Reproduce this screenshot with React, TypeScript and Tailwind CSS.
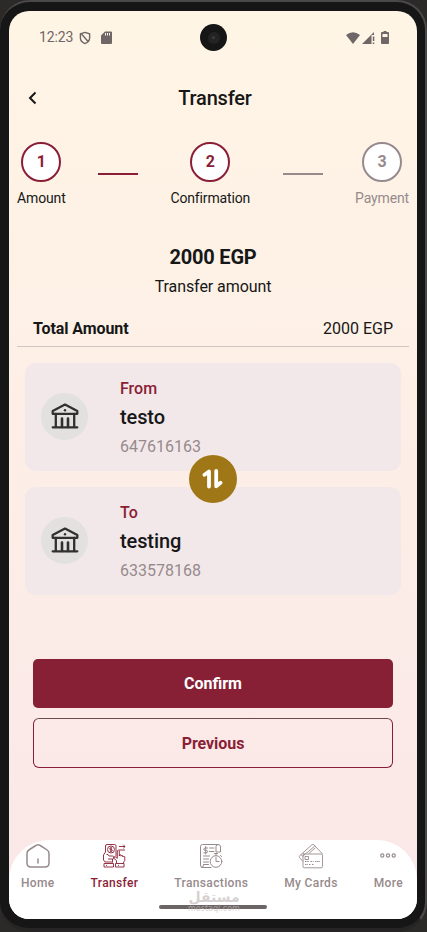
import type { ReactNode } from "react";

function Step({ n, label, active }: { n: number; label: string; active: boolean }) {
  return (
    <div className="flex flex-col items-center">
      <div
        className={`flex size-10 items-center justify-center rounded-full border-[2.500px] bg-white text-[16px] font-bold ${
          active ? "border-[#8a1e36] text-[#8a1e36]" : "border-[#978a8c] text-[#978a8c]"
        }`}
      >
        {n}
      </div>
      <span className={`mt-[6px] text-[14px] leading-5 tracking-[-0.140px] whitespace-nowrap ${active ? "text-[#171717]" : "text-[#978a8c]"}`}>
        {label}
      </span>
    </div>
  );
}

function Dash({ active }: { active: boolean }) {
  return <div className={`mt-[31px] h-[2px] w-10 ${active ? "bg-[#8a1e36]" : "bg-[#978a8c]"}`} />;
}

function BankIcon() {
  return (
    <svg width="28" height="28" viewBox="0 0 28 28" fill="none" stroke="#303030" strokeWidth="2.300" strokeLinecap="round" strokeLinejoin="round">
      <path d="M1.700 11.800V9L14 2.600 26.300 9v2.800z" />
      <path d="M1.700 25.300h24.600M4.800 12v13M23.200 12v13" />
      <path d="M11 16.500V25M17 16.500V25" strokeWidth="2.600" />
      <circle cx="14" cy="8.200" r="1.200" fill="#303030" stroke="none" />
    </svg>
  );
}

function Account({ kind, name, number }: { kind: string; name: string; number: string }) {
  return (
    <div className="flex h-[108px] items-center rounded-[11px] bg-[#f2e8ea] pl-4">
      <div className="mb-[2px] flex size-[47px] items-center justify-center rounded-full bg-[#e2e1df]">
        <BankIcon />
      </div>
      <div className="ml-8 flex flex-col pt-[2px]">
        <span className="text-[16px] leading-6 font-medium text-[#8a1e36]">{kind}</span>
        <span className="mt-px text-[20px] leading-[30px] font-medium tracking-[-0.100px] text-[#171717]">{name}</span>
        <span className="mt-[3px] text-[16px] leading-6 text-[#978a8c]">{number}</span>
      </div>
    </div>
  );
}

function HomeIcon() {
  return (
    <svg width="24" height="26" viewBox="0 0 24 26" fill="none" stroke="#978a8c" strokeWidth="1.500" strokeLinejoin="round" strokeLinecap="round">
      <path d="M9.800 2.500 2.800 7Q1 8.200 1 10.500V20q0 4 4 4h14q4 0 4-4v-9.500Q23 8.200 21.200 7l-7-4.500Q12 1 9.800 2.500zM12 16v4" />
    </svg>
  );
}

function TransferIcon() {
  return (
    <svg width="24" height="26" viewBox="0 0 24 26" fill="none" stroke="#8a1e36" strokeWidth="0.900" strokeLinejoin="round">
      <path d="M3.500 9V3q0-1.500 1.500-1.500h7.500Q14 1.500 14 3v10.500M3.500 9l-2 3v5l1.500 2h7.500M4.500 11.500H6l1 1.500h3.500q1.500 0 1.500 1.500T10.500 16H6M10.500 16v3.500M2 20.500h9.500v3.500H2zM4 22.300h1" />
      <circle cx="9" cy="6.500" r="3.500" />
      <path d="M10.200 5H8.700q-1 0-1 .8t1 .8h.6q1 0 1 .8T9.300 8.200H7.700M9 4v5M17 3.500h6M21.200 1.700 23 3.500l-1.800 1.800M23 7h-6" />
      <path d="M14.500 20v-2.500L11.500 15q.3-1.800 2-1l1.800 1.300V7.800q1-1.300 2 0V13q.2-1.800 1.800-1v1.200q.3-1.200 1.700-.4V14q.3-1.200 2-.2v3.500L21 20.500M13.500 20.500H22v3.500h-8.500zM16 22.300h1" />
    </svg>
  );
}

function TransactionsIcon() {
  return (
    <svg width="24" height="26" viewBox="0 0 24 26" fill="none" stroke="#978a8c" strokeWidth="1" strokeLinecap="round" strokeLinejoin="round">
      <path d="M12 24.500H3.500Q1.500 24.500 1.500 22V3.500q0-2 2-2H19q2.500 0 2.500 2.500V9H17V3.500q0-2 2-2M2.500 24.500q2 0 2-2" />
      <path d="M8.500 5H6.300Q4.800 5 4.800 6.200t1.500 1.200h.8q1.500 0 1.500 1.200T7 9.800H4.800M6.700 3.500v7.500M10.500 5H15M10.500 8.500H15M4.500 13h6M4.500 16h5M4.500 19h5M4.500 21.500h5" />
      <circle cx="17" cy="18.500" r="5.800" />
      <path d="M17 14.500v4h3M15.500 10.500h3M17 10.500v2M21.500 12.500l1 1" />
    </svg>
  );
}

function CardsIcon() {
  return (
    <svg width="26" height="26" viewBox="0 0 26 26" fill="none" stroke="#978a8c" strokeWidth="0.900" strokeLinejoin="round">
      <path d="M5 18.500 1.500 14.500q-.7-1 .2-1.800L14 1.700q1-.7 1.800.1l8.700 9.100M3 11.500l2 2.300M4.800 10l2 2M5 13 16.800 3M10.500 10.800l6.800-6" />
      <rect x="5" y="11" width="19.500" height="13.800" rx="1.300" />
      <path d="M7 13.500h3.500v3H7z" />
      <path d="M7 18.500h4m1.500 0h3m1.500 0h5M7 21.500h3m1 0h2m1 0h2" strokeDasharray="1.500 .7" strokeWidth="1.200" />
    </svg>
  );
}

function MoreIcon() {
  return (
    <svg width="16" height="26" viewBox="0 0 16 26" fill="none" stroke="#978a8c" strokeWidth="1.200">
      <circle cx="2.300" cy="12.500" r="1.600" />
      <circle cx="8" cy="12.500" r="1.600" />
      <circle cx="13.700" cy="12.500" r="1.600" />
    </svg>
  );
}

function Tab({ icon, label, active = false }: { icon: ReactNode; label: string; active?: boolean }) {
  return (
    <div className="flex flex-col items-center">
      <div className="flex h-[26px] items-center">{icon}</div>
      <span className={`mt-[7px] text-[12px] leading-[14px] font-medium tracking-[0.360px] whitespace-nowrap ${active ? "text-[#8a1e36]" : "text-[#978a8c]"}`}>
        {label}
      </span>
    </div>
  );
}

export default function App() {
  return (
    <div className="h-[932px] w-[427px] overflow-hidden bg-[#2c2929] font-['Roboto',sans-serif]">
      <div className="flex h-[932px] w-[427px] flex-col rounded-[30px] border-t-2 border-r-2 border-b-4 border-t-[#4a4848] border-r-[#4a4848] border-b-[#272425] bg-[#161616] pt-[9px] pl-[9px]">
        <div className="relative flex h-[908px] w-[408px] shrink-0 flex-col overflow-hidden rounded-[20px] bg-linear-to-b from-[#fff5e5] to-[#fae7e8]">
          <div className="flex h-[53px] items-center justify-between pr-7 pl-[30px] text-[#6f6668]">
            <div className="flex items-center">
              <span className="text-[14px] tracking-[-0.100px]">12:23</span>
              <svg className="ml-[6px]" width="12" height="14" viewBox="0 0 13 14" fill="none" stroke="#6f6668" strokeWidth="1.500">
                <path d="M6.500 1 11.500 2.500V7q0 4-5 6-5-2-5-6V2.500zM3 3l7 8" />
              </svg>
              <svg className="ml-[10px]" width="11" height="13" viewBox="0 0 11 13" fill="#6f6668">
                <path fillRule="evenodd" d="M4 .5h6q1 0 1 1V12q0 1-1 1H1q-1 0-1-1V4.500zM4 2v2.500h1V2zm2 0v2.500h1V2zm2 0v2.500h1V2z" />
              </svg>
            </div>
            <div className="flex items-center">
              <svg width="14" height="12" viewBox="0 0 14 12" fill="#6f6668"><path d="M0 3Q7-2.500 14 3L7 12z" /></svg>
              <svg className="ml-[2px]" width="13" height="13" viewBox="0 0 13 13" fill="#6f6668"><path d="M0 13 12 1v3H9.500v9zM10.800 5.500h1.500v4.500h-1.500zM10.800 11.500h1.500V13h-1.500z" /></svg>
              <svg className="ml-[6px]" width="8" height="13" viewBox="0 0 8 13"><path fill="#6f6668" fillRule="evenodd" d="M2.500 0h3v1H7q1 0 1 1v10q0 1-1 1H1q-1 0-1-1V2q0-1 1-1h1.500zM1.500 3v3h5V3z" /></svg>
            </div>
          </div>
          <div className="absolute top-[13px] left-[191px] flex size-[27px] items-center justify-center rounded-full bg-[#161616]">
            <div className="flex size-3 items-center justify-center rounded-full bg-[#232323]">
              <div className="size-[3px] rounded-full bg-[#3c3c3c]" />
            </div>
          </div>

          <header className="grid h-[68px] grid-cols-[42px_1fr_38px] items-center px-2">
            <svg className="ml-[10px]" width="10" height="14" viewBox="0 0 10 14" fill="none" stroke="#171717" strokeWidth="2"><path d="M8.500 1.500 3 7l5.500 5.500" /></svg>
            <h1 className="text-center text-[20px] leading-7 font-medium tracking-[-0.200px] text-[#171717]">Transfer</h1>
          </header>

          <div className="mt-[10px] flex h-[68px] items-start justify-between px-2">
            <Step n={1} label="Amount" active />
            <Dash active />
            <Step n={2} label="Confirmation" active />
            <Dash active={false} />
            <Step n={3} label="Payment" active={false} />
          </div>

          <div className="mt-[32px] text-center text-[#171717]">
            <p className="text-[20px] leading-[30px] font-bold tracking-[-0.200px]">2000 EGP</p>
            <p className="mt-[3px] text-[16px] leading-6 tracking-[-0.080px]">Transfer amount</p>
          </div>
          <div className="mx-2 mt-[18px] flex h-[30px] justify-between border-b border-[#cfc6c4] px-4 text-[16px] leading-6 text-[#171717]">
            <span className="font-bold tracking-[-0.080px]">Total Amount</span>
            <span>2000 EGP</span>
          </div>

          <div className="relative mx-4 mt-4 flex flex-col gap-4">
            <Account kind="From" name="testo" number="647616163" />
            <Account kind="To" name="testing" number="633578168" />
            <div className="absolute top-[92px] left-[164px] flex size-12 items-center justify-center rounded-full bg-[#9f7716]">
              <svg width="22" height="22" viewBox="0 0 22 22" fill="none" stroke="white" strokeWidth="3.800" strokeLinecap="round" strokeLinejoin="round">
                <path d="M2.500 6.800 7 3.500V18.500M14.200 3v15.300l4.300-3.600" />
              </svg>
            </div>
          </div>

          <div className="mx-6 mt-16 flex flex-col gap-[10px] text-[16px] font-bold">
            <button className="h-[49px] rounded-[5px] bg-[#871f35] text-white">Confirm</button>
            <button className="h-[50px] rounded-[6px] border border-t-[#6e4a4d] border-[#8a1e36] pt-[2px] tracking-[-0.060px] text-[#8a1e36]">Previous</button>
          </div>

          <nav className="relative mt-auto flex h-[79px] items-start justify-between rounded-t-[40px] bg-white pt-[3px] pr-[14px] pl-3">
            <Tab icon={<HomeIcon />} label="Home" />
            <Tab icon={<TransferIcon />} label="Transfer" active />
            <Tab icon={<TransactionsIcon />} label="Transactions" />
            <Tab icon={<CardsIcon />} label="My Cards" />
            <Tab icon={<MoreIcon />} label="More" />
            <div className="absolute top-[65px] left-[150px] h-1 w-[108px] rounded-full bg-[#6b6565]" />
            <div className="absolute top-[51px] left-[178px] w-[54px] text-center font-['DejaVu_Sans',sans-serif] whitespace-nowrap text-[#c5bcbc]/70">
              <div className="text-[14px] leading-[13px] font-bold" dir="rtl">مستقل</div>
              <div className="text-[8px] leading-[9px]">mostaql.com</div>
            </div>
          </nav>
        </div>
      </div>
    </div>
  );
}
